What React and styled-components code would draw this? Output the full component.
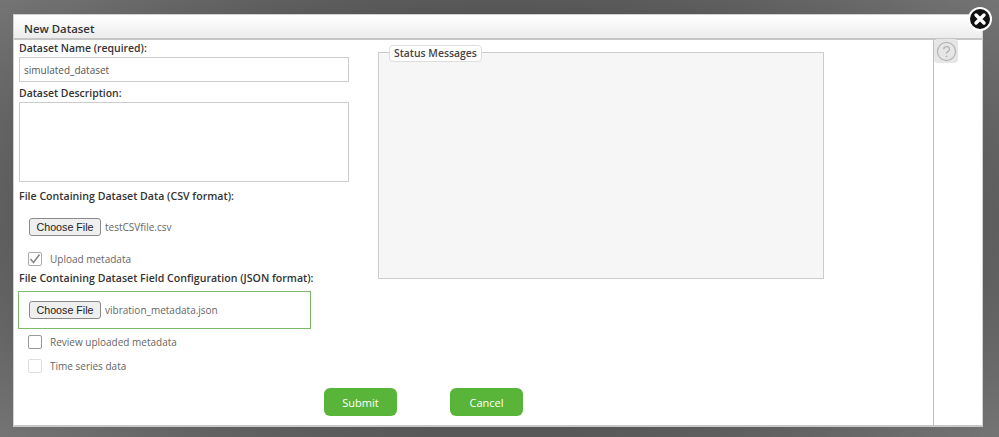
import React from "react";
import styled, { createGlobalStyle } from "styled-components";

const Global = createGlobalStyle`
  html, body { margin: 0; padding: 0; height: 100%; overflow: hidden; }
  body { background: #5a5a5a; }
  * { box-sizing: border-box; }
`;
const Page = styled.div`
  width: 999px; height: 437px; padding: 14px 16px 10px 13px;
  background: radial-gradient(ellipse 700px 340px at 50% 50%, #4f4f4f 0%, #555 60%, #787878 100%);
  font-family: "Open Sans", "Noto Sans", sans-serif;
`;
const Modal = styled.div`
  position: relative; width: 970px; height: 413px; display: flex; flex-direction: column;
  background: #fff; border: 1px solid #d0d0d0; border-bottom: 2px solid #c8c8c8;
`;
const Header = styled.div`
  height: 25px; flex: none; padding: 5px 0 0 10px; font-size: 11.4px; line-height: 17px; font-weight: 600; color: #333;
  background: linear-gradient(#ffffff, #ececec); border-bottom: 2px solid #c6c6c6;
`;
const Close = styled.div`
  position: absolute; top: -8px; right: -10px; width: 24px; height: 24px; border-radius: 50%;
  background: #111; border: 2px solid #fff; display: flex; align-items: center; justify-content: center;
`;
const Body = styled.div` flex: 1; display: flex; min-height: 0; `;
const Main = styled.div` width: 919px; flex: none; display: flex; `;
const Sidebar = styled.div` flex: 1; border-left: 1px solid #bdbdbd; `;
const Help = styled.div`
  width: 24px; height: 24px; margin-top: -1px; border-radius: 4px; background: #e6e6e6; display: flex; align-items: center; justify-content: center;
`;
const FormCol = styled.div` width: 364px; flex: none; padding: 1px 0 0 5px; display: flex; flex-direction: column; `;
const Label = styled.div`
  font-size: ${p => (p.$wide ? 10.6 : 10.45)}px; line-height: 15px; font-weight: 600; color: #333; margin-top: ${p => p.$top || 0}px; white-space: nowrap;
`;
const TextInput = styled.div`
  width: 330px; height: 25px; margin-top: 1px; border: 1px solid #ccc; padding: 0 4px; color: #555;
  font-size: 10px; line-height: 24px;
`;
const TextArea = styled.div` width: 330px; height: 80px; margin-top: 1px; border: 1px solid #ccc; `;
const FileRow = styled.div`
  display: flex; align-items: center; gap: 4px; margin-left: ${p => p.$inset}px; margin-top: ${p => p.$top}px; height: 18px;
`;
const FileButton = styled.button`
  width: 72px; height: 18px; padding: 0; border: 1px solid #8a8a8a; border-radius: 3px; background: #efefef;
  font-family: "Liberation Sans", Arial, sans-serif; font-size: 10.7px; color: #222;
`;
const FileName = styled.span` font-size: 10px; color: #666; white-space: nowrap; `;
const GreenBox = styled.div` width: 293px; height: 38px; margin: 5px 0 0 -1px; border: 1px solid #7cb968; `;
const CheckRow = styled.div`
  display: flex; align-items: center; gap: 8px; margin: ${p => p.$top}px 0 0 9px; height: 14px;
`;
const Box = styled.div`
  width: 14px; height: 14px; flex: none; border-radius: 2px; border: 1px solid ${p => (p.$faint ? "#ddd" : p.$checked ? "#aaa" : "#999")};
  background: #fff; display: flex; align-items: center; justify-content: center;
`;
const CheckText = styled.span` font-size: 10px; color: #666; white-space: nowrap; `;
const RightCol = styled.div` flex: 1; padding: 4px 0 0 0; display: flex; flex-direction: column; `;
const Status = styled.fieldset`
  margin: 0; padding: 0; width: 446px; height: 235px; background: #f6f6f6; border: 1px solid #ccc;
  min-inline-size: 0;
`;
const Legend = styled.legend`
  position: relative; top: 1px;
  margin-left: 10px; padding: 0 4px; height: 17px; line-height: 15px; font-size: 10.4px; font-weight: 600; color: #444;
  background: #fff; border: 1px solid #ddd; border-radius: 4px; white-space: nowrap;
`;
const Buttons = styled.div` position: absolute; left: 310px; top: 373px; display: flex; gap: 53px; `;
const GreenButton = styled.div`
  width: 73px; height: 28px; border-radius: 6px; background: #59b53a; color: #fff; font-size: 11px;
  display: flex; align-items: center; justify-content: center;
`;

export default function App() {
  return (
    <Page>
      <Global />
      <Modal>
        <Header>New Dataset</Header>
        <Close>
          <svg width="14" height="14" viewBox="0 0 14 14"><path d="M3 3l8 8M11 3l-8 8" stroke="#fff" strokeWidth="3.4" strokeLinecap="round" /></svg>
        </Close>
        <Body>
          <Main>
            <FormCol>
              <Label>Dataset Name (required):</Label>
              <TextInput>simulated_dataset</TextInput>
              <Label $top={4}>Dataset Description:</Label>
              <TextArea />
              <Label $top={7} $wide>File Containing Dataset Data (CSV format):</Label>
              <FileRow $inset={10} $top={14}><FileButton>Choose File</FileButton><FileName>testCSVfile.csv</FileName></FileRow>
              <CheckRow $top={16}>
                <Box $checked>
                  <svg width="12" height="12" viewBox="0 0 12 12"><path d="M1.5 6l3 3.5 6-8" fill="none" stroke="#888" strokeWidth="1.6" /></svg>
                </Box>
                <CheckText>Upload metadata</CheckText>
              </CheckRow>
              <Label $top={5} $wide>File Containing Dataset Field Configuration (JSON format):</Label>
              <GreenBox>
                <FileRow $inset={10} $top={9}><FileButton>Choose File</FileButton><FileName>vibration_metadata.json</FileName></FileRow>
              </GreenBox>
              <CheckRow $top={6}><Box /><CheckText>Review uploaded metadata</CheckText></CheckRow>
              <CheckRow $top={10}><Box $faint /><CheckText>Time series data</CheckText></CheckRow>
            </FormCol>
            <RightCol>
              <Status><Legend>Status Messages</Legend></Status>
            </RightCol>
          </Main>
          <Sidebar>
            <Help>
              <svg width="21" height="21" viewBox="0 0 20 20">
                <circle cx="10" cy="10" r="8.6" fill="none" stroke="#b5b5b5" strokeWidth="1.2" />
                <path d="M7.4 7.8c0-3.2 5.4-3.2 5.4 0 0 2.2-2.8 2-2.8 4.4" fill="none" stroke="#b5b5b5" strokeWidth="1.3" />
                <circle cx="10" cy="14.6" r="0.9" fill="#b5b5b5" />
              </svg>
            </Help>
          </Sidebar>
        </Body>
        <Buttons><GreenButton>Submit</GreenButton><GreenButton>Cancel</GreenButton></Buttons>
      </Modal>
    </Page>
  );
}
